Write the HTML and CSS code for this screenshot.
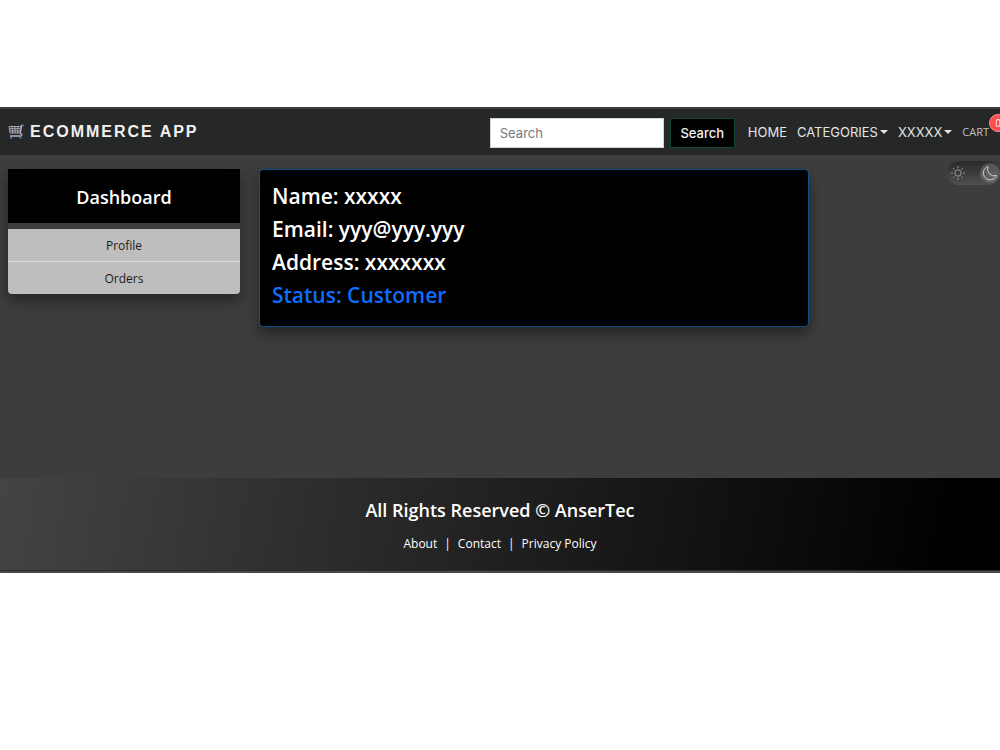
FILE: index.html
```html
<!DOCTYPE html>
<html lang="en">
<head>
<meta charset="utf-8">
<title>Dashboard - Ecommerce App</title>
<link rel="stylesheet" href="styles.css">
</head>
<body>
<div class="app">
  <header class="navbar">
    <a class="brand" href="#">
      <svg class="brand-icon" viewBox="0 0 16 16" aria-hidden="true">
        <path d="M1 2.500h12l-1 6.500H2zM1.500 4.700h11M1.800 6.900h10.500M4 2.500l.6 6.500M7 2.500V9M10 2.500L9.500 9" fill="none" stroke="#aaa4b0"/>
        <path d="M15 1.500h-1.300L12.300 9l1.700 1.500-1 1.500H2" fill="none" stroke="#b5b0ba" stroke-width="1.300"/>
        <circle cx="3" cy="13.800" r="1.100" fill="#4479c9"/>
        <circle cx="12.500" cy="13.800" r="1.100" fill="#4479c9"/>
        <path d="M14 1.400h2" stroke="#4479c9" stroke-width="1.400"/>
      </svg>
      <span>ECOMMERCE APP</span>
    </a>
    <form class="search">
      <input class="search-input" type="search" placeholder="Search" aria-label="Search">
      <button class="search-button" type="button">Search</button>
    </form>
    <nav class="menu">
      <a class="menu-link" href="#">HOME</a>
      <a class="menu-link has-caret" href="#">CATEGORIES</a>
      <a class="menu-link has-caret" href="#">XXXXX</a>
      <a class="menu-link cart" href="#">CART<span class="badge">0</span></a>
    </nav>
  </header>
  <main class="content">
    <aside class="sidebar">
      <h4 class="sidebar-title">Dashboard</h4>
      <a class="sidebar-link" href="#">Profile</a>
      <a class="sidebar-link" href="#">Orders</a>
    </aside>
    <section class="card">
      <h3 class="card-line">Name: xxxxx</h3>
      <h3 class="card-line">Email: yyy@yyy.yyy</h3>
      <h3 class="card-line">Address: xxxxxxx</h3>
      <h3 class="card-line status">Status: Customer</h3>
    </section>
    <button class="theme-toggle" type="button" aria-label="Toggle theme">
      <svg class="sun" viewBox="0 0 16 16" aria-hidden="true">
        <circle cx="8" cy="8" r="3.200"/>
        <path d="M8 1v2M8 13v2M1 8h2M13 8h2M3 3l1.400 1.400M11.600 11.600L13 13M3 13l1.400-1.400M11.600 4.400L13 3"/>
      </svg>
      <span class="knob">
        <svg class="moon" viewBox="0 0 16 16" aria-hidden="true">
          <path d="M6 1.500a6.800 6.800 0 1 0 8.500 9A6.800 6.800 0 0 1 6 1.500z"/>
        </svg>
      </span>
    </button>
  </main>
  <footer class="footer">
    <h4 class="footer-title">All Rights Reserved © AnserTec</h4>
    <p class="footer-links">
      <a href="#">About</a><span>|</span><a href="#">Contact</a><span>|</span><a href="#">Privacy Policy</a>
    </p>
  </footer>
</div>
</body>
</html>
```
FILE: styles.css
```css
* {
  box-sizing: border-box;
}

body {
  margin: 0;
  padding: 107px 0;
  background: #fff;
  font-family: "Open Sans", "Noto Sans", sans-serif;
}

a {
  color: inherit;
  text-decoration: none;
}

h3, h4, p {
  margin: 0;
}

.app {
  overflow: hidden;
  background: #3d3d3d;
  border-top: 2px solid #3f3f3f;
  border-bottom: 2px solid #48484c;
}

.navbar {
  display: flex;
  align-items: center;
  height: 46px;
  padding-left: 8px;
  background: #262828;
  font-family: Inter, sans-serif;
}

.brand {
  display: flex;
  align-items: center;
  gap: 6px;
  margin-right: auto;
  color: #f1f1f1;
  font: bold 16px/24px "Liberation Sans", sans-serif;
  letter-spacing: 2px;
}

.brand-icon {
  width: 16px;
  height: 16px;
}

.search {
  display: flex;
  gap: 6px;
  margin: 2px 13px 0 0;
}

.search-input,
.search-button {
  height: 30px;
  font: 13px/20px Inter, sans-serif;
}

.search-input {
  width: 174px;
  padding: 0 9px;
  border: 1px solid #ced4da;
  border-radius: 0;
  background: #fff;
  color: #212529;
  appearance: none;
}

.search-input::placeholder {
  color: #75797d;
  opacity: 1;
}

.search-button {
  width: 65px;
  padding: 0;
  border: 1px solid #11472f;
  background: #000;
  color: #f4f4f4;
  font-weight: 500;
}

.menu {
  display: flex;
  align-items: center;
  gap: 10px;
  margin-right: 11px;
}

.menu-link {
  display: flex;
  align-items: center;
  gap: 2px;
  color: #e3e4e4;
  font-size: 13px;
  line-height: 20px;
  white-space: nowrap;
}

.has-caret::after {
  content: "";
  border: 4px solid transparent;
  border-top-color: currentColor;
  border-bottom: 0;
}

.cart {
  position: relative;
  color: #bfc0c0;
  font: 11px/20px "Open Sans", sans-serif;
}

.badge {
  position: absolute;
  top: -8px;
  left: 100%;
  width: 18px;
  height: 18px;
  border: 1px solid #ff9094;
  border-radius: 50%;
  background: #ff4d4f;
  color: #fff;
  font-size: 10px;
  line-height: 16px;
  text-align: center;
}

.content {
  display: flex;
  align-items: flex-start;
  min-height: 323px;
  padding: 14px 0 0 8px;
}

.sidebar {
  flex: 0 0 232px;
  margin-right: 19px;
  border-radius: 0 0 5px 5px;
  box-shadow: 0 7px 14px rgba(0, 0, 0, .4);
  text-align: center;
}

.sidebar-title {
  margin-bottom: 6px;
  padding: 15px 0 12px;
  background: #000;
  color: #fff;
  font-size: 18px;
  font-weight: 600;
  line-height: 27px;
}

.sidebar-link {
  display: block;
  padding: 7px 0 5px;
  background: #bebebe;
  color: #1b1b1b;
  font-size: 12px;
  line-height: 20px;
}

.sidebar-link + .sidebar-link {
  border-top: 1px solid #dadada;
}

.sidebar-link:last-child {
  border-radius: 0 0 4px 4px;
}

.card {
  flex: 0 1 550px;
  margin-right: auto;
  padding: 10px 12px 14px;
  border: 1px solid #12508c;
  border-radius: 4px;
  background: #000;
  box-shadow: 0 7px 14px rgba(0, 0, 0, .4);
  color: #fff;
}

.card-line {
  font-size: 21px;
  font-weight: 600;
  line-height: 33px;
}

.status {
  color: #0d6efd;
}

.theme-toggle {
  display: flex;
  align-items: center;
  justify-content: space-between;
  width: 53px;
  height: 24px;
  margin-top: -8px;
  padding: 0 0 0 3px;
  border: 0;
  border-radius: 12px;
  background: linear-gradient(#292929, #505050);
}

.sun {
  width: 16px;
  height: 16px;
  fill: none;
  stroke: #999;
}

.knob {
  display: flex;
  align-items: center;
  justify-content: center;
  width: 20px;
  height: 20px;
  border-radius: 50%;
  background: linear-gradient(#525252, #686868);
}

.moon {
  width: 16px;
  height: 16px;
  fill: none;
  stroke: #d2d2d2;
}

.footer {
  padding: 19px 0 16px;
  background: linear-gradient(100deg, #444, #000 95%);
  border-bottom: 1px solid #292930;
  color: #fff;
  text-align: center;
}

.footer-title {
  margin-bottom: 10px;
  font-size: 18px;
  font-weight: 600;
  line-height: 27px;
}

.footer-links {
  display: flex;
  justify-content: center;
  gap: 7px;
  font-size: 12px;
  line-height: 20px;
}
```
